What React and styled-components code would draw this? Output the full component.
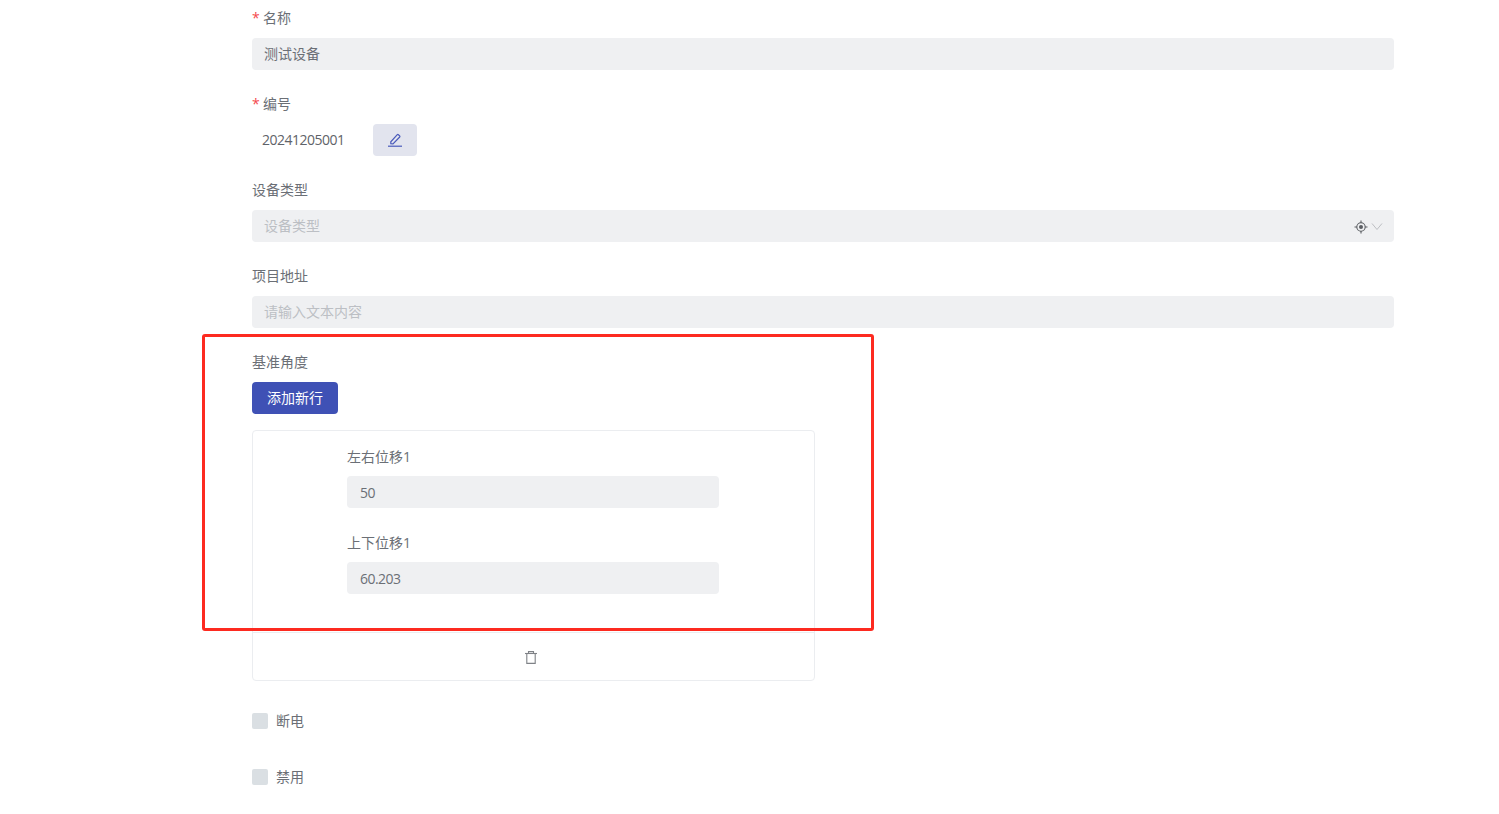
import React from "react";
import styled, { createGlobalStyle } from "styled-components";

const Global = createGlobalStyle`
  html, body { margin: 0; padding: 0; background: #fff; }
  body { font-family: "Open Sans", "Noto Sans CJK SC", sans-serif; font-size: 14px; color: #606266; }
`;
const Page = styled.div`
  position: relative;
  width: 1499px;
  height: 814px;
  overflow: hidden;
  padding: 8px 105px 0 252px;
  box-sizing: border-box;
`;
const Field = styled.div`
  display: flex;
  flex-direction: column;
  align-items: flex-start;
  margin-bottom: ${(p) => p.$mb ?? 24}px;
`;
const Label = styled.label`
  display: flex;
  align-items: flex-start;
  height: 22px;
  line-height: ${(p) => (p.$inner ? 22 : 20)}px;
  margin-bottom: 8px;
  font-size: 14px;
  color: #6b6f76;
`;
const Star = styled.span`
  color: #f5484d;
  margin-right: 4px;
  font-size: 14px;
  width: 7px;
`;
const Input = styled.div`
  width: ${(p) => p.$w || "100%"};
  height: 32px;
  box-sizing: border-box;
  display: flex;
  align-items: center;
  justify-content: space-between;
  padding: ${(p) => (p.$numeric ? "0 12px 0 13px" : "0 12px 2px")};
  background: #eff0f2;
  border-radius: 4px;
  font-size: 14px;
  letter-spacing: ${(p) => (p.$numeric ? "-0.55px" : "0")};
  color: ${(p) => (p.$placeholder ? "#bcbfc4" : "#6b6f76")};
`;
const CodeRow = styled.div`
  display: flex;
  align-items: center;
  height: 32px;
`;
const Code = styled.span`
  width: 121px;
  padding: 0 0 2px 10px;
  box-sizing: border-box;
  letter-spacing: -0.5px;
  color: #5f6369;
`;
const EditButton = styled.button`
  width: 44px;
  height: 32px;
  padding: 0;
  border: 0;
  border-radius: 4px;
  background: #e2e4ee;
  display: flex;
  align-items: center;
  justify-content: center;
`;
const Suffix = styled.span`
  display: flex;
  align-items: center;
  gap: 3px;
  margin: 3px -1px 0 0;
`;
const ChevronWrap = styled.span`
  display: flex;
  margin-top: 1px;
`;
const PrimaryButton = styled.button`
  height: 32px;
  width: 86px;
  border: 0;
  padding: 0 0 2px;
  border-radius: 4px;
  background: #3f51b5;
  color: #fff;
  font: inherit;
  font-size: 14px;
  margin-bottom: 16px;
`;
const Card = styled.div`
  width: 563px;
  height: 251px;
  box-sizing: border-box;
  border: 1px solid #ebedf0;
  border-radius: 4px;
  display: flex;
  flex-direction: column;
`;
const CardBody = styled.div`
  flex: 1;
  padding: 15px 95px 0 94px;
`;
const CardFoot = styled.div`
  height: 47px;
  box-sizing: content-box;
  border-top: 1px solid #ebedf0;
  display: flex;
  align-items: center;
  justify-content: center;
  padding-right: 6px;
`;
const TrashWrap = styled.span`
  display: flex;
  margin-top: 1px;
`;
const Check = styled.label`
  display: flex;
  align-items: center;
  gap: 8px;
  height: 16px;
  margin-bottom: 40px;
  color: #6b6f76;
`;
const Box = styled.span`
  width: 16px;
  height: 16px;
  border-radius: 2px;
  background: #dadfe3;
`;
const CheckText = styled.span`
  margin-top: -2px;
`;
const Highlight = styled.div`
  position: absolute;
  left: 202px;
  top: 334px;
  width: 672px;
  height: 297px;
  box-sizing: border-box;
  border: 3px solid #fd2a20;
  border-radius: 3px;
  pointer-events: none;
`;

const Target = () => (
  <svg width="14" height="14" viewBox="0 0 14 14" fill="none" stroke="#5a5d62">
    <circle cx="7" cy="7" r="4.2" strokeWidth="1.1" />
    <circle cx="7" cy="7" r="2" fill="#5a5d62" stroke="none" />
    <path d="M7 .5v2.4M7 11.1v2.4M.5 7h2.4M11.1 7h2.4" strokeWidth="1.1" />
  </svg>
);
const Chevron = () => (
  <svg width="12" height="12" viewBox="0 0 12 12" fill="none" stroke="#bdbfc3" strokeWidth="1">
    <path d="M1 2.5l5 6 5-6" />
  </svg>
);
const Pen = () => (
  <svg width="14" height="14" viewBox="0 0 14 14" fill="none" stroke="#4a5abb" strokeWidth="1.2">
    <path d="M0 13.2h14" />
    <path d="M2.8 10.6V8.8L9.3 1.7a.8.8 0 0 1 1.1 0l1.3 1.2a.8.8 0 0 1 0 1.1L5 10.8z" />
  </svg>
);
const Trash = () => (
  <svg width="12" height="13" viewBox="0 0 12 13" fill="none" stroke="#7f8287" strokeWidth="1.1">
    <path d="M0 2.5h12" />
    <path d="M3.5 2.5V.6h5v1.9" />
    <path d="M1.8 2.5v9.9h8.4V2.5" />
  </svg>
);

export default function App() {
  return (
    <Page>
      <Global />
      <Field>
        <Label><Star>*</Star>名称</Label>
        <Input>测试设备</Input>
      </Field>
      <Field>
        <Label><Star>*</Star>编号</Label>
        <CodeRow>
          <Code>20241205001</Code>
          <EditButton aria-label="编辑"><Pen /></EditButton>
        </CodeRow>
      </Field>
      <Field>
        <Label>设备类型</Label>
        <Input $placeholder>
          设备类型
          <Suffix><Target /><ChevronWrap><Chevron /></ChevronWrap></Suffix>
        </Input>
      </Field>
      <Field>
        <Label>项目地址</Label>
        <Input $placeholder>请输入文本内容</Input>
      </Field>
      <Field $mb={32}>
        <Label>基准角度</Label>
        <PrimaryButton>添加新行</PrimaryButton>
        <Card>
          <CardBody>
            <Field>
              <Label $inner>左右位移1</Label>
              <Input $numeric>50</Input>
            </Field>
            <Field>
              <Label $inner>上下位移1</Label>
              <Input $numeric>60.203</Input>
            </Field>
          </CardBody>
          <CardFoot><TrashWrap><Trash /></TrashWrap></CardFoot>
        </Card>
      </Field>
      <Check><Box /><CheckText>断电</CheckText></Check>
      <Check><Box /><CheckText>禁用</CheckText></Check>
      <Highlight />
    </Page>
  );
}
